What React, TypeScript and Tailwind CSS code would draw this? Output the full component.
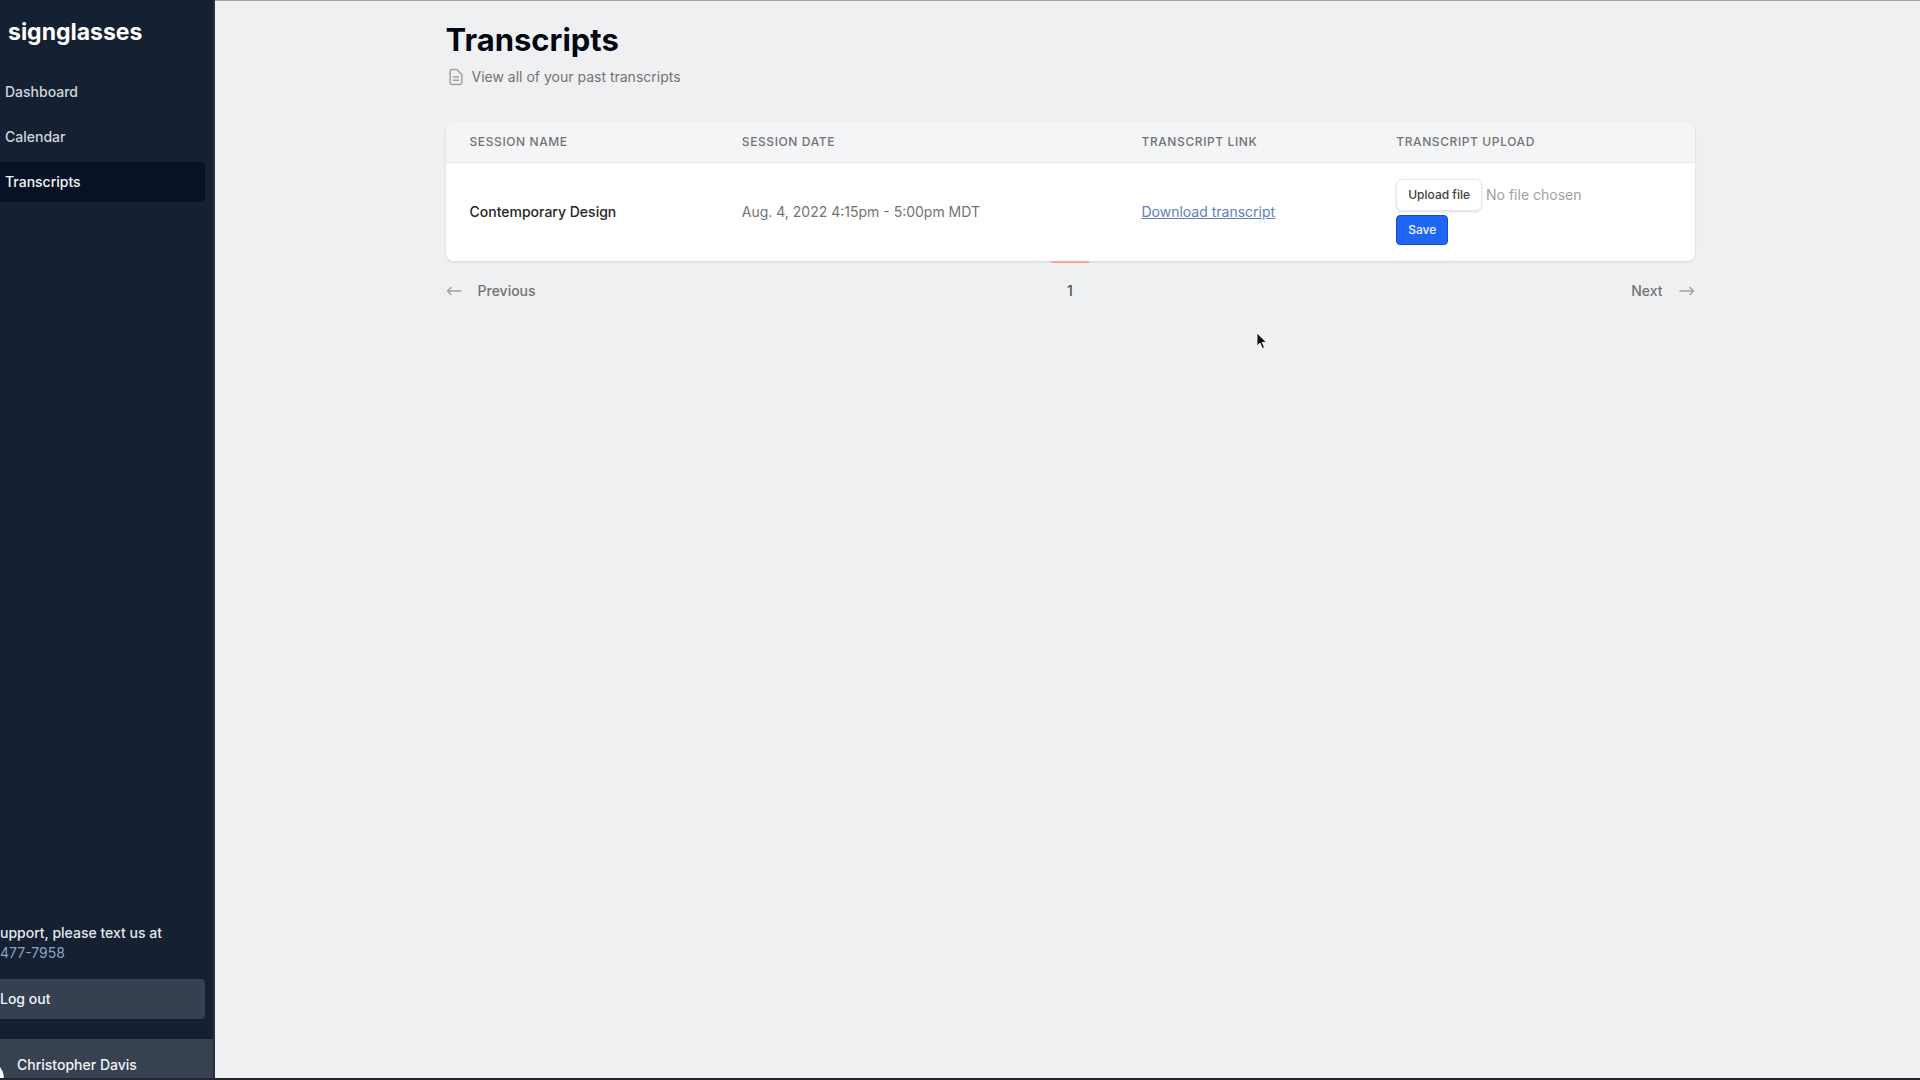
import { useState } from 'react'

type Session = { name: string; date: string }

const NAV = ['Dashboard', 'Calendar', 'Transcripts']
const COLUMNS = ['Session name', 'Session date', 'Transcript link', 'Transcript upload']
const SESSIONS: Session[] = [
  { name: 'Contemporary Design', date: 'Aug. 4, 2022 4:15pm - 5:00pm MDT' },
]

function DocumentIcon() {
  return (
    <svg className="size-5 shrink-0 text-neutral-400" viewBox="0 0 24 24" fill="none" stroke="currentColor"
      strokeWidth="1.8" strokeLinecap="round" strokeLinejoin="round" aria-hidden="true">
      <path d="M9 12h6m-6 4h6m2 5H7a2 2 0 01-2-2V5a2 2 0 012-2h5.586a1 1 0 01.707.293l5.414 5.414a1 1 0 01.293.707V19a2 2 0 01-2 2z" />
    </svg>
  )
}

function Arrow({ dir }: { dir: 'left' | 'right' }) {
  return (
    <svg className="h-5 w-4 text-neutral-400" viewBox="0 0 16 20" fill="none" stroke="currentColor"
      strokeWidth="1.5" strokeLinecap="round" strokeLinejoin="round" aria-hidden="true">
      {dir === 'left'
        ? <path d="M5 6.500L1.500 10l3.500 3.500M1.500 10H15" />
        : <path d="M11 6.500l3.500 3.500-3.500 3.500M14.500 10H1" />}
    </svg>
  )
}

function Sidebar() {
  return (
    <aside className="sticky top-0 flex h-screen w-[215px] shrink-0 flex-col overflow-hidden border-r-2 border-[#2b2f38] bg-[#152132] text-sm font-medium text-gray-300">
      <div className="px-2 pt-4 text-[23px] leading-8 font-bold text-white">signglasses</div>
      <nav className="mt-6 flex flex-col gap-[5px] pr-2">
        {NAV.map(item => (
          <a key={item} href="#"
            className={`rounded-r-sm px-[5px] py-2 leading-6 ${
              item === 'Transcripts' ? 'bg-[#071226] text-gray-100' : ''}`}>
            {item}
          </a>
        ))}
      </nav>
      <div className="grow" />
      <div className="pr-2 leading-5">
        <p className="text-gray-200">upport, please text us at</p>
        <a href="#" className="font-normal text-[#8f9fc4]">477-7958</a>
        <button className="mt-4 block w-full rounded-r-sm bg-[#354051] py-2 text-left leading-6 text-gray-100">Log out</button>
      </div>
      <div className="mt-5 flex h-[41px] items-start overflow-hidden bg-[#374151]">
        <span className="mt-5 -ml-9 size-10 shrink-0 rounded-full bg-white" />
        <span className="ml-[13px] pt-4 leading-5 text-gray-100">Christopher Davis</span>
      </div>
    </aside>
  )
}

function UploadCell() {
  const [file, setFile] = useState('')
  return (
    <form className="flex flex-col items-start gap-1" onSubmit={e => e.preventDefault()}>
      <div className="flex items-center gap-1">
        <label htmlFor="upload"
          className="cursor-pointer rounded-md border border-gray-200 bg-white px-[11px] py-[5px] text-xs leading-5 font-medium text-neutral-700 shadow-sm">
          Upload file
        </label>
        <input id="upload" type="file" className="sr-only"
          onChange={e => setFile(e.target.files?.[0]?.name ?? '')} />
        <span className="text-neutral-400">{file || 'No file chosen'}</span>
      </div>
      <button className="rounded-sm border border-[#1550c8] bg-[#1f66f5] px-[11px] py-1 text-xs leading-5 font-medium text-blue-50">Save</button>
    </form>
  )
}

export default function App() {
  return (
    <div className="relative flex min-h-screen bg-[#eff0f2] font-['Inter','Liberation_Sans',sans-serif] text-neutral-500">
      <Sidebar />
      <main className="min-w-0 grow border-t border-neutral-400 px-8">
        <div className="mx-auto max-w-[1254px] pt-5 pl-[5px]">
          <h1 className="text-[31px] leading-[38px] font-bold text-gray-950">Transcripts</h1>
          <p className="mt-1.5 flex items-center gap-1.5 text-sm leading-6">
            <DocumentIcon />
            View all of your past transcripts
          </p>

          <div className="mt-[33px] overflow-hidden rounded-lg shadow">
            <table className="w-full table-fixed text-left">
              <colgroup>
                <col className="w-[21.8%]" />
                <col className="w-[32%]" />
                <col className="w-[20.4%]" />
                <col />
              </colgroup>
              <thead className="border-b border-gray-200 bg-[#f4f5f7]">
                <tr>
                  {COLUMNS.map(c => (
                    <th key={c} className="px-6 py-3 text-xs leading-4 font-medium tracking-wider uppercase">{c}</th>
                  ))}
                </tr>
              </thead>
              <tbody className="bg-white text-sm leading-5">
                {SESSIONS.map(s => (
                  <tr key={s.name}>
                    <td className="px-6 py-4 font-medium text-neutral-800">{s.name}</td>
                    <td className="px-6 py-4">{s.date}</td>
                    <td className="px-6 py-4"><a href="#" className="text-[#6180b8] underline">Download transcript</a></td>
                    <td className="px-6 py-4"><UploadCell /></td>
                  </tr>
                ))}
              </tbody>
            </table>
          </div>

          <nav aria-label="Pagination" className="flex items-start justify-between text-sm leading-5 font-medium">
            <a href="#" className="flex flex-1 items-center gap-4 pt-5"><Arrow dir="left" />Previous</a>
            <a href="#" className="border-t-2 border-red-300 px-4 pt-[18px] text-neutral-600">1</a>
            <a href="#" className="flex flex-1 items-center justify-end gap-4 pt-5">Next<Arrow dir="right" /></a>
          </nav>
        </div>
      </main>

      {/* mouse pointer */}
      <svg className="pointer-events-none absolute top-[332px] left-[1256px] h-[18px] w-3" viewBox="0 0 12 18" aria-hidden="true">
        <path d="M1 1v13l3-3 2.4 5.5 2-1L6.200 10.300H10.500z" fill="#111" stroke="#fff" strokeWidth="0.8" />
      </svg>
      <div className="absolute inset-x-0 bottom-0 h-0.5 bg-[#24262b]" />
    </div>
  )
}
